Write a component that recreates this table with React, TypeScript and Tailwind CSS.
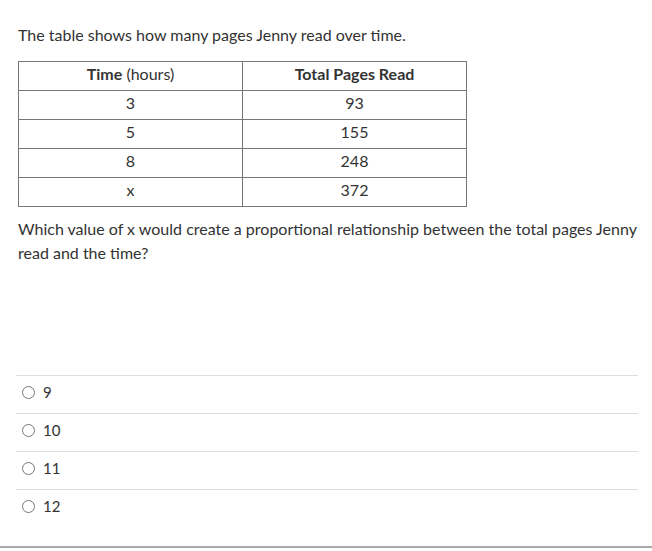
import React from "react";

const rows: [string, string][] = [
  ["3", "93"],
  ["5", "155"],
  ["8", "248"],
  ["x", "372"],
];

const options = ["9", "10", "11", "12"];

export default function App() {
  return (
    <div
      className="w-[652px] h-[551px] bg-white text-[#333] flex flex-col overflow-hidden"
      style={{ fontFamily: "Lato, 'Open Sans', sans-serif" }}
    >
      <div className="flex-1 pl-[18px] pr-[14px]">
        <p className="mt-[25px] text-[16px] leading-[20px]">
          The table shows how many pages Jenny read over time.
        </p>
        <table className="mt-[16px] border-collapse w-[449px] text-[16px] text-[#333]">
          <thead>
            <tr className="h-[29px]">
              <th className="border border-[#777] font-normal w-[224px] text-center pb-[4px]">
                <span className="font-bold">Time</span> (hours)
              </th>
              <th className="border border-[#777] font-bold text-center pb-[4px]">Total Pages Read</th>
            </tr>
          </thead>
          <tbody>
            {rows.map(([a, b]) => (
              <tr key={a} className="h-[29px]">
                <td className="border border-[#777] text-center pb-[4px]">{a}</td>
                <td className="border border-[#777] text-center pb-[4px]">{b}</td>
              </tr>
            ))}
          </tbody>
        </table>
        <p className="mt-[10px] text-[16px] leading-[24px] w-[625px]">
          Which value of x would create a proportional relationship between the total pages Jenny read and
          the time?
        </p>
        <div className="mt-[110px] ml-[-2px] w-[622px]">
          {options.map((o) => (
            <div key={o} className="border-t border-[#ddd] h-[38px] flex items-center pl-[6px] pb-[4px] gap-[8px]">
              <span className="w-[13px] h-[13px] rounded-full border border-[#777] bg-white" />
              <span className="text-[15px] leading-none">{o}</span>
            </div>
          ))}
        </div>
      </div>
      <div className="h-[2px] bg-[#aaa] mb-[3px]" />
    </div>
  );
}
